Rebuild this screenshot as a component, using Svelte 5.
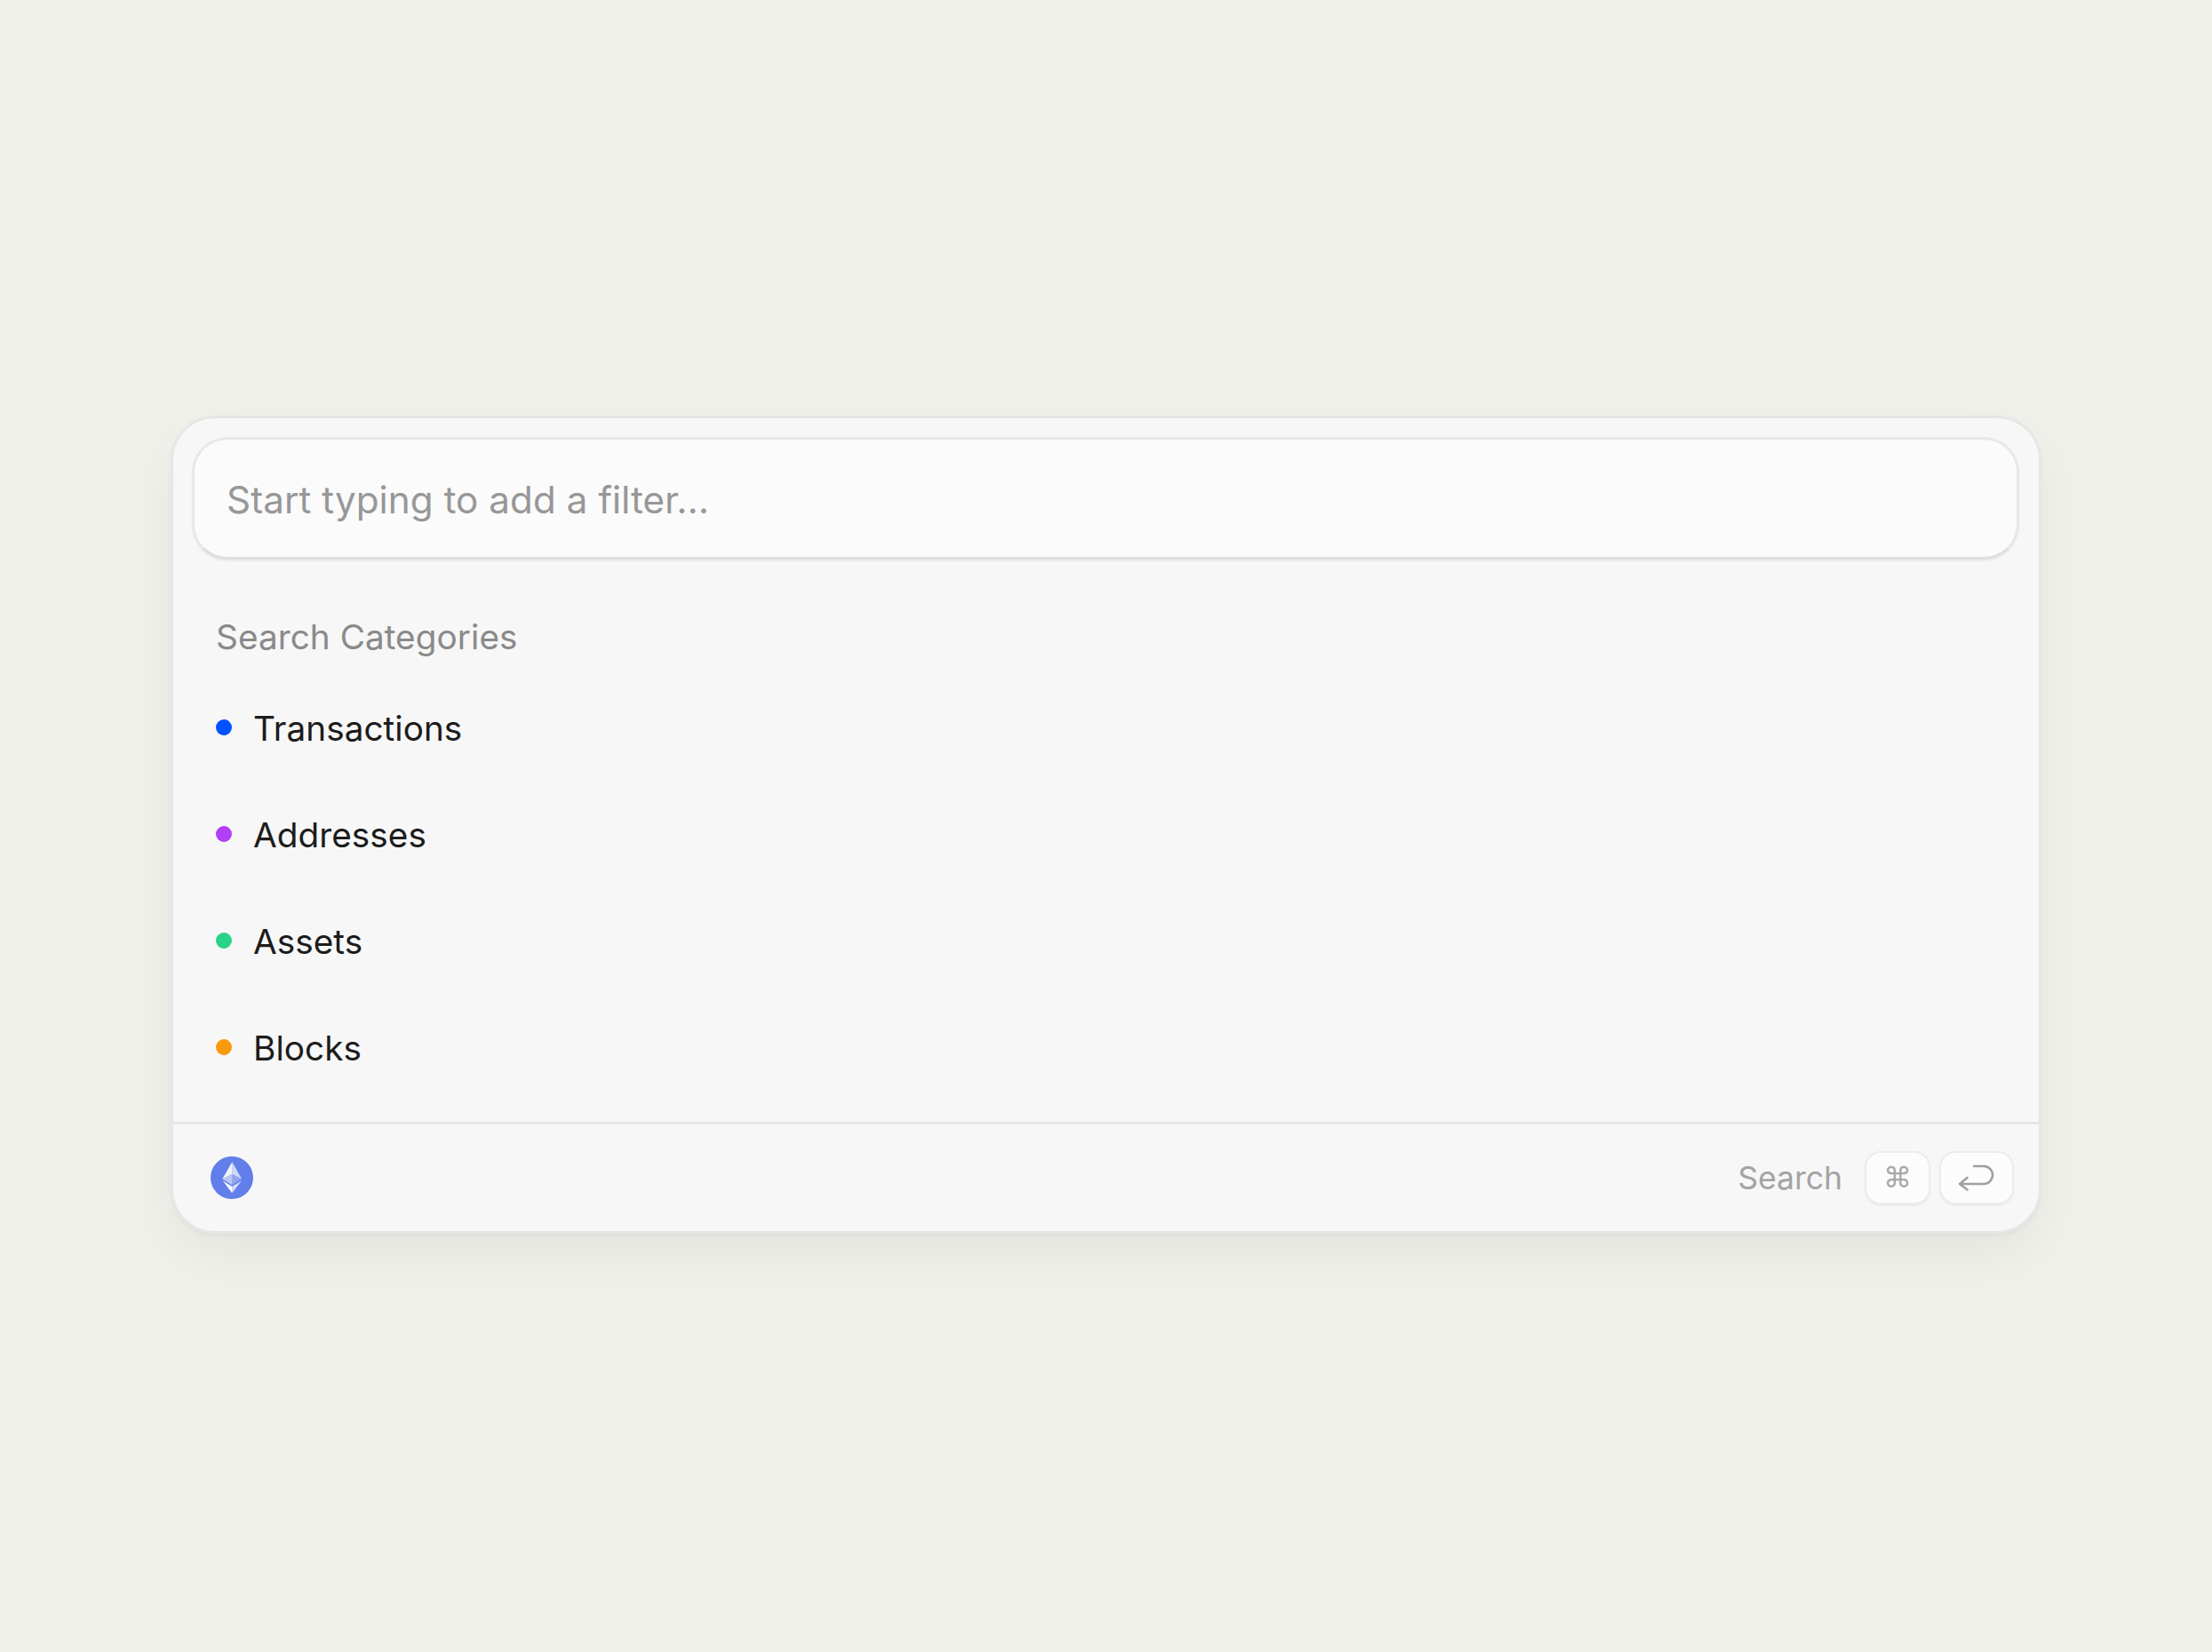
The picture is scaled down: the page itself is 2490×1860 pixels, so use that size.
<script>
	const categories = [
		{ label: 'Transactions', color: '#0052ff' },
		{ label: 'Addresses', color: '#b23ff5' },
		{ label: 'Assets', color: '#2ad38b' },
		{ label: 'Blocks', color: '#f99a0e' }
	]
</script>

<main class="page">
	<section class="panel">
		<div class="top">
			<div class="field">Start typing to add a filter...</div>
			<h2>Search Categories</h2>
			<ul>
				{#each categories as category}
					<li>
						<span class="dot" style:background={category.color}></span>
						{category.label}
					</li>
				{/each}
			</ul>
		</div>
		<footer>
			<svg class="eth" viewBox="0 0 48 48" aria-hidden="true">
				<circle cx="24" cy="24" r="24" fill="#627eea" />
				<path d="M24.300 6.300V19.700L13.300 25.300Z" fill="#fff" fill-opacity="0.9" />
				<path d="M24.300 6.300V19.700L35 25.300Z" fill="#fff" fill-opacity="0.7" />
				<path d="M24.300 19.700L13.300 25.300L24.300 32.300Z" fill="#fff" fill-opacity="0.55" />
				<path d="M24.300 19.700L35 25.300L24.300 32.300Z" fill="#fff" fill-opacity="0.3" />
				<path d="M13.700 27.300L24.300 34V41.300Z" fill="#fff" />
				<path d="M35 27.300L24.300 34V41.300Z" fill="#fff" fill-opacity="0.75" />
			</svg>
			<div class="hint">
				<span>Search</span>
				<kbd class="cmd">⌘</kbd>
				<kbd class="enter">
					<svg viewBox="0 0 42 30" aria-hidden="true">
						<path d="M10.500 15 2 22l8.500 6.500M2 22h27a10 10 0 0 0 0-20H18" fill="none" stroke="#a0a0a0" stroke-width="2.600" stroke-linecap="round" stroke-linejoin="round" />
					</svg>
				</kbd>
			</div>
		</footer>
	</section>
</main>

<style>
	:global(body) {
		margin: 0;
		background: #f1f1ec;
	}

	.page {
		height: 1860px;
		padding: 468px 192px 0 192px;
		box-sizing: border-box;
		font-family: Inter, "Noto Sans", sans-serif;
	}

	.panel {
		height: 921px;
		box-sizing: border-box;
		border: 3px solid #e6e6e4;
		border-radius: 50px;
		background: #f7f7f7;
		box-shadow: 0 3px 4px rgba(0, 0, 0, 0.03), 0 24px 60px rgba(0, 0, 0, 0.05);
		display: flex;
		flex-direction: column;
		overflow: hidden;
	}

	.top {
		flex: 1;
		padding: 21px 22px 0 21px;
	}

	.field {
		height: 138px;
		box-sizing: border-box;
		border: 3px solid #e8e8e8;
		border-bottom-color: #dedede;
		border-radius: 40px;
		background: #fbfbfb;
		box-shadow: 0 2px 2px rgba(0, 0, 0, 0.06);
		padding: 2px 0 0 36px;
		display: flex;
		align-items: center;
		font-size: 42.300px;
		color: #979797;
	}

	h2 {
		margin: 62px 0 0 27px;
		font-size: 38.800px;
		line-height: 50px;
		font-weight: 400;
		color: #8a8a8a;
	}

	ul {
		list-style: none;
		margin: 17px 0 0 27px;
		padding: 0;
	}

	li {
		height: 120px;
		display: flex;
		align-items: center;
		gap: 24px;
		font-size: 38.800px;
		color: #1c1c1c;
	}

	.dot {
		width: 18px;
		height: 18px;
		border-radius: 50%;
	}

	footer {
		height: 123px;
		box-sizing: border-box;
		border-top: 3px solid #e6e6e6;
		display: flex;
		align-items: center;
		justify-content: space-between;
		padding: 0 28px 0 42px;
	}

	.eth {
		width: 48px;
		height: 48px;
	}

	.hint {
		display: flex;
		align-items: center;
		gap: 10px;
		font-size: 35.500px;
		color: #a3a3a3;
	}

	.hint span {
		margin-right: 15px;
	}

	kbd {
		height: 60px;
		box-sizing: border-box;
		border: 2px solid #ececec;
		border-radius: 18px;
		background: #fcfcfc;
		box-shadow: 0 2px 2px rgba(0, 0, 0, 0.05);
		display: flex;
		align-items: center;
		justify-content: center;
		font-family: "DejaVu Sans", sans-serif;
		font-weight: 400;
		color: #a8a8a8;
	}

	.cmd {
		width: 74px;
		font-size: 32px;
	}

	.enter {
		width: 84px;
	}

	.enter svg {
		width: 42px;
		height: 30px;
	}
</style>
